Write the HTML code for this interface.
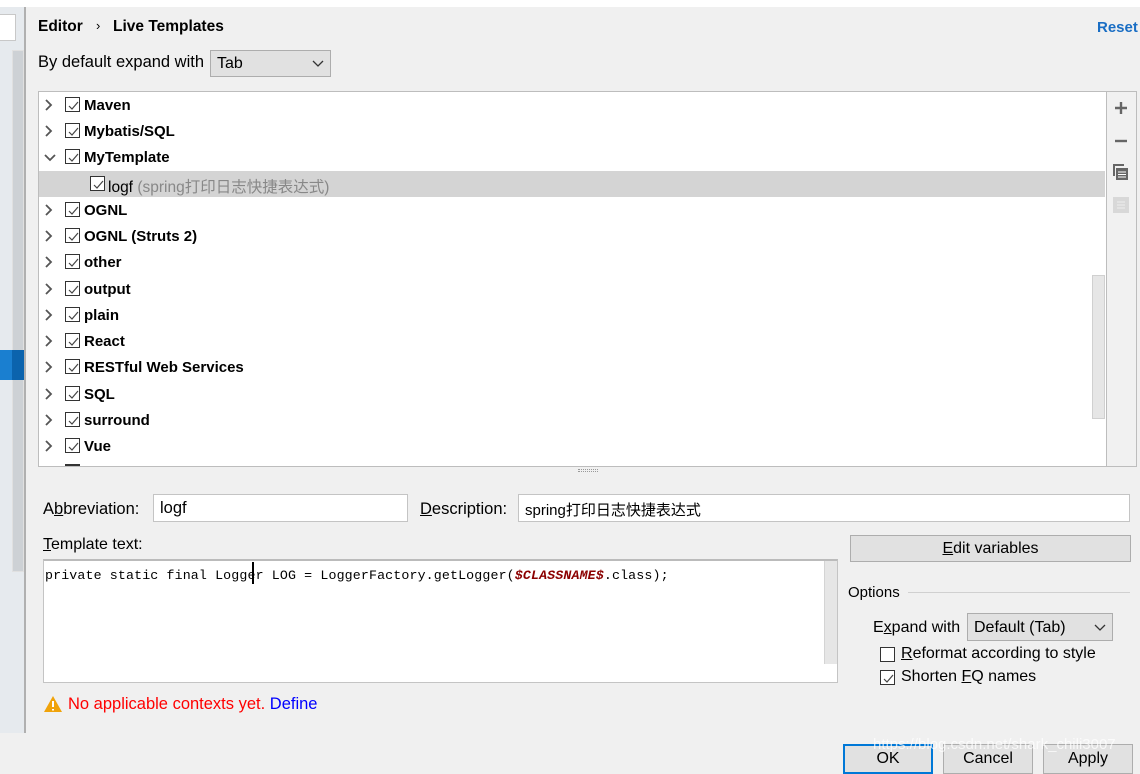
<!DOCTYPE html>
<html><head><meta charset="utf-8"><style>
*{margin:0;padding:0;box-sizing:border-box}
body{width:1140px;height:764px;overflow:hidden;background:#f0f0f0;position:relative;font-family:"Liberation Sans","Noto Sans CJK SC",sans-serif;font-size:16px;color:#000}
.a{position:absolute}
.cb{position:absolute;width:15px;height:15px;border:1px solid #333;background:#fff}
.cb svg{position:absolute;left:1px;top:1px}
.row{position:absolute;left:39px;width:1053px;height:26px}
.row .ar{position:absolute;left:5px;top:7px}
.row .cb{left:26px;top:5px}
.row b{position:absolute;left:45px;top:5px;font-size:15px}
u{text-decoration:underline}
.btn{position:absolute;border:1px solid #adadad;background:#e1e1e1;text-align:center;font-size:16px}
</style></head><body>
<div class="a" style="left:0;top:0;width:1140px;height:7px;background:#fff"></div>
<div class="a" style="left:0;top:7px;width:24px;height:726px;background:#e6eaee"></div>
<div class="a" style="left:0;top:14px;width:16px;height:27px;background:#fff;border:1px solid #c8c8c8;border-left:none"></div>
<div class="a" style="left:12px;top:50px;width:12px;height:522px;background:#cdd1d5;border:1px solid #e0e0e0"></div>
<div class="a" style="left:0;top:350px;width:12px;height:30px;background:#1a7fd0"></div>
<div class="a" style="left:12px;top:350px;width:12px;height:30px;background:#0b63ad"></div>
<div class="a" style="left:24px;top:7px;width:2px;height:726px;background:#b0b0b0"></div>

<div class="a" style="left:38px;top:18px;font-weight:bold;font-size:15.5px">Editor</div>
<div class="a" style="left:96px;top:18px;font-size:13px">›</div>
<div class="a" style="left:113px;top:18px;font-weight:bold;font-size:15.5px">Live Templates</div>
<div class="a" style="left:1097px;top:19px;font-weight:bold;color:#1a6ec4;font-size:15px">Reset</div>

<div class="a" style="left:38px;top:53px;font-size:16.5px">By default expand with</div>
<div class="a" style="left:210px;top:50px;width:121px;height:27px;background:#e1e1e1;border:1px solid #adadad;padding:4px 6px">Tab
<svg class="a" style="left:101px;top:9px" width="12" height="8"><path d="M1 1L6 6L11 1" stroke="#333" fill="none" stroke-width="1.3"/></svg></div>

<div class="a" style="left:38px;top:91px;width:1069px;height:376px;background:#fff;border:1px solid #bdbdbd"></div>
<div class="a" style="left:39px;top:171px;width:1066px;height:26px;background:#d4d4d4"></div>
<div class="a" style="left:1092px;top:275px;width:13px;height:144px;background:#e6e6e6;border:1px solid #d0d0d0"></div>
<div class="a" style="left:1106px;top:91px;width:31px;height:376px;background:#f1f1f1;border:1px solid #bdbdbd"></div>
<svg class="a" style="left:1113px;top:100px" width="16" height="16"><path d="M8 2V14M2 8H14" stroke="#666" stroke-width="2.4"/></svg>
<svg class="a" style="left:1113px;top:133px" width="16" height="16"><path d="M2 8H14" stroke="#666" stroke-width="2.4"/></svg>
<svg class="a" style="left:1112px;top:163px" width="18" height="18"><path d="M1 1H12V3H3V13H1Z" fill="#666"/><rect x="4" y="5" width="12" height="12" fill="#666"/><path d="M6 9H14M6 11.5H14M6 14H14" stroke="#fff" stroke-width="1"/></svg>
<svg class="a" style="left:1113px;top:197px" width="16" height="16"><rect x="0" y="0" width="16" height="16" fill="#d8d8d8"/><path d="M4 5H12M4 8H12M4 11H12" stroke="#eee"/></svg>

<div class="row" style="top:92px"><svg class="ar" width="10" height="12"><path d="M2 1L7 6L2 11" stroke="#555" fill="none" stroke-width="1.8"/></svg><span class="cb"><svg width="13" height="13"><path d="M2 7L5 10L11 3" stroke="#444" fill="none" stroke-width="1.2"/></svg></span><b>Maven</b></div>
<div class="row" style="top:118px"><svg class="ar" width="10" height="12"><path d="M2 1L7 6L2 11" stroke="#555" fill="none" stroke-width="1.8"/></svg><span class="cb"><svg width="13" height="13"><path d="M2 7L5 10L11 3" stroke="#444" fill="none" stroke-width="1.2"/></svg></span><b>Mybatis/SQL</b></div>
<div class="row" style="top:144px"><svg class="ar" style="top:9px" width="12" height="10"><path d="M1 2L6 7L11 2" stroke="#555" fill="none" stroke-width="1.8"/></svg><span class="cb"><svg width="13" height="13"><path d="M2 7L5 10L11 3" stroke="#444" fill="none" stroke-width="1.2"/></svg></span><b>MyTemplate</b></div>
<div class="a" style="left:90px;top:176px"><span class="cb" style="position:absolute;left:0;top:0"><svg width="13" height="13"><path d="M2 7L5 10L11 3" stroke="#444" fill="none" stroke-width="1.2"/></svg></span></div>
<div class="a" style="left:108px;top:175px;font-size:15.5px">logf <span style="color:#888">(spring打印日志快捷表达式)</span></div>
<div class="row" style="top:197px"><svg class="ar" width="10" height="12"><path d="M2 1L7 6L2 11" stroke="#555" fill="none" stroke-width="1.8"/></svg><span class="cb"><svg width="13" height="13"><path d="M2 7L5 10L11 3" stroke="#444" fill="none" stroke-width="1.2"/></svg></span><b>OGNL</b></div>
<div class="row" style="top:223px"><svg class="ar" width="10" height="12"><path d="M2 1L7 6L2 11" stroke="#555" fill="none" stroke-width="1.8"/></svg><span class="cb"><svg width="13" height="13"><path d="M2 7L5 10L11 3" stroke="#444" fill="none" stroke-width="1.2"/></svg></span><b>OGNL (Struts 2)</b></div>
<div class="row" style="top:249px"><svg class="ar" width="10" height="12"><path d="M2 1L7 6L2 11" stroke="#555" fill="none" stroke-width="1.8"/></svg><span class="cb"><svg width="13" height="13"><path d="M2 7L5 10L11 3" stroke="#444" fill="none" stroke-width="1.2"/></svg></span><b>other</b></div>
<div class="row" style="top:276px"><svg class="ar" width="10" height="12"><path d="M2 1L7 6L2 11" stroke="#555" fill="none" stroke-width="1.8"/></svg><span class="cb"><svg width="13" height="13"><path d="M2 7L5 10L11 3" stroke="#444" fill="none" stroke-width="1.2"/></svg></span><b>output</b></div>
<div class="row" style="top:302px"><svg class="ar" width="10" height="12"><path d="M2 1L7 6L2 11" stroke="#555" fill="none" stroke-width="1.8"/></svg><span class="cb"><svg width="13" height="13"><path d="M2 7L5 10L11 3" stroke="#444" fill="none" stroke-width="1.2"/></svg></span><b>plain</b></div>
<div class="row" style="top:328px"><svg class="ar" width="10" height="12"><path d="M2 1L7 6L2 11" stroke="#555" fill="none" stroke-width="1.8"/></svg><span class="cb"><svg width="13" height="13"><path d="M2 7L5 10L11 3" stroke="#444" fill="none" stroke-width="1.2"/></svg></span><b>React</b></div>
<div class="row" style="top:354px"><svg class="ar" width="10" height="12"><path d="M2 1L7 6L2 11" stroke="#555" fill="none" stroke-width="1.8"/></svg><span class="cb"><svg width="13" height="13"><path d="M2 7L5 10L11 3" stroke="#444" fill="none" stroke-width="1.2"/></svg></span><b>RESTful Web Services</b></div>
<div class="row" style="top:381px"><svg class="ar" width="10" height="12"><path d="M2 1L7 6L2 11" stroke="#555" fill="none" stroke-width="1.8"/></svg><span class="cb"><svg width="13" height="13"><path d="M2 7L5 10L11 3" stroke="#444" fill="none" stroke-width="1.2"/></svg></span><b>SQL</b></div>
<div class="row" style="top:407px"><svg class="ar" width="10" height="12"><path d="M2 1L7 6L2 11" stroke="#555" fill="none" stroke-width="1.8"/></svg><span class="cb"><svg width="13" height="13"><path d="M2 7L5 10L11 3" stroke="#444" fill="none" stroke-width="1.2"/></svg></span><b>surround</b></div>
<div class="row" style="top:433px"><svg class="ar" width="10" height="12"><path d="M2 1L7 6L2 11" stroke="#555" fill="none" stroke-width="1.8"/></svg><span class="cb"><svg width="13" height="13"><path d="M2 7L5 10L11 3" stroke="#444" fill="none" stroke-width="1.2"/></svg></span><b>Vue</b></div>
<div class="a" style="left:65px;top:464px;width:15px;height:2px;background:#333"></div>
<div class="a" style="left:578px;top:469px;width:20px;height:3px;border-top:1px dotted #999;border-bottom:1px dotted #999"></div>

<div class="a" style="left:43px;top:500px;font-size:16.5px">A<u>b</u>breviation:</div>
<div class="a" style="left:153px;top:494px;width:255px;height:28px;background:#fff;border:1px solid #c4c4c4;padding:4px 6px;font-size:16.5px">logf</div>
<div class="a" style="left:420px;top:500px;font-size:16.5px"><u>D</u>escription:</div>
<div class="a" style="left:518px;top:494px;width:612px;height:28px;background:#fff;border:1px solid #c4c4c4;padding:4px 6px;font-size:15px">spring打印日志快捷表达式</div>
<div class="a" style="left:43px;top:536px;font-size:16px"><u>T</u>emplate text:</div>
<div class="a" style="left:43px;top:559px;width:795px;height:124px;background:#fff;border:1px solid #c4c4c4;border-top:2px solid #bbb"></div>
<div class="a" style="left:824px;top:561px;width:13px;height:103px;background:#e6e6e6;border-left:1px solid #d4d4d4"></div>
<div class="a" style="left:45px;top:568px;font-family:'Liberation Mono',monospace;font-size:13.3px;letter-spacing:0.12px;white-space:pre">private static final Logger LOG = LoggerFactory.getLogger(<b style="color:#8b0000;font-style:italic">$CLASSNAME$</b>.class);</div>
<div class="a" style="left:252px;top:562px;width:2px;height:22px;background:#000"></div>
<svg class="a" style="left:44px;top:696px" width="18" height="16"><path d="M9 0L18 16H0Z" fill="#f0a30a"/><path d="M9 5V11M9 13V14.5" stroke="#fff" stroke-width="2"/></svg>
<div class="a" style="left:68px;top:695px;color:#f00;font-size:16.5px">No applicable contexts yet. <span style="color:#00f">Define</span></div>

<div class="btn" style="left:850px;top:535px;width:281px;height:27px;padding-top:4px"><u>E</u>dit variables</div>
<div class="a" style="left:848px;top:584px;font-size:15px">Options</div>
<div class="a" style="left:908px;top:592px;width:222px;height:1px;background:#d0d0d0"></div>
<div class="a" style="left:873px;top:619px">E<u>x</u>pand with</div>
<div class="a" style="left:967px;top:613px;width:146px;height:28px;background:#e1e1e1;border:1px solid #adadad;padding:5px 6px">Default (Tab)
<svg class="a" style="left:126px;top:10px" width="12" height="8"><path d="M1 1L6 6L11 1" stroke="#333" fill="none" stroke-width="1.3"/></svg></div>
<span class="cb" style="left:880px;top:647px"></span>
<div class="a" style="left:901px;top:645px"><u>R</u>eformat according to style</div>
<span class="cb" style="left:880px;top:670px"><svg width="13" height="13"><path d="M2 7L5 10L11 3" stroke="#444" fill="none" stroke-width="1.2"/></svg></span>
<div class="a" style="left:901px;top:668px">Shorten <u>F</u>Q names</div>

<div class="btn" style="left:843px;top:744px;width:90px;height:30px;border:2px solid #0078d7;padding-top:4px">OK</div>
<div class="btn" style="left:943px;top:744px;width:90px;height:30px;padding-top:5px">Cancel</div>
<div class="btn" style="left:1043px;top:744px;width:90px;height:30px;padding-top:5px">Apply</div>
<div class="a" style="left:873px;top:736px;color:rgba(255,255,255,0.75);font-size:15px">https://blog.csdn.net/shark_chili3007</div>
</body></html>
